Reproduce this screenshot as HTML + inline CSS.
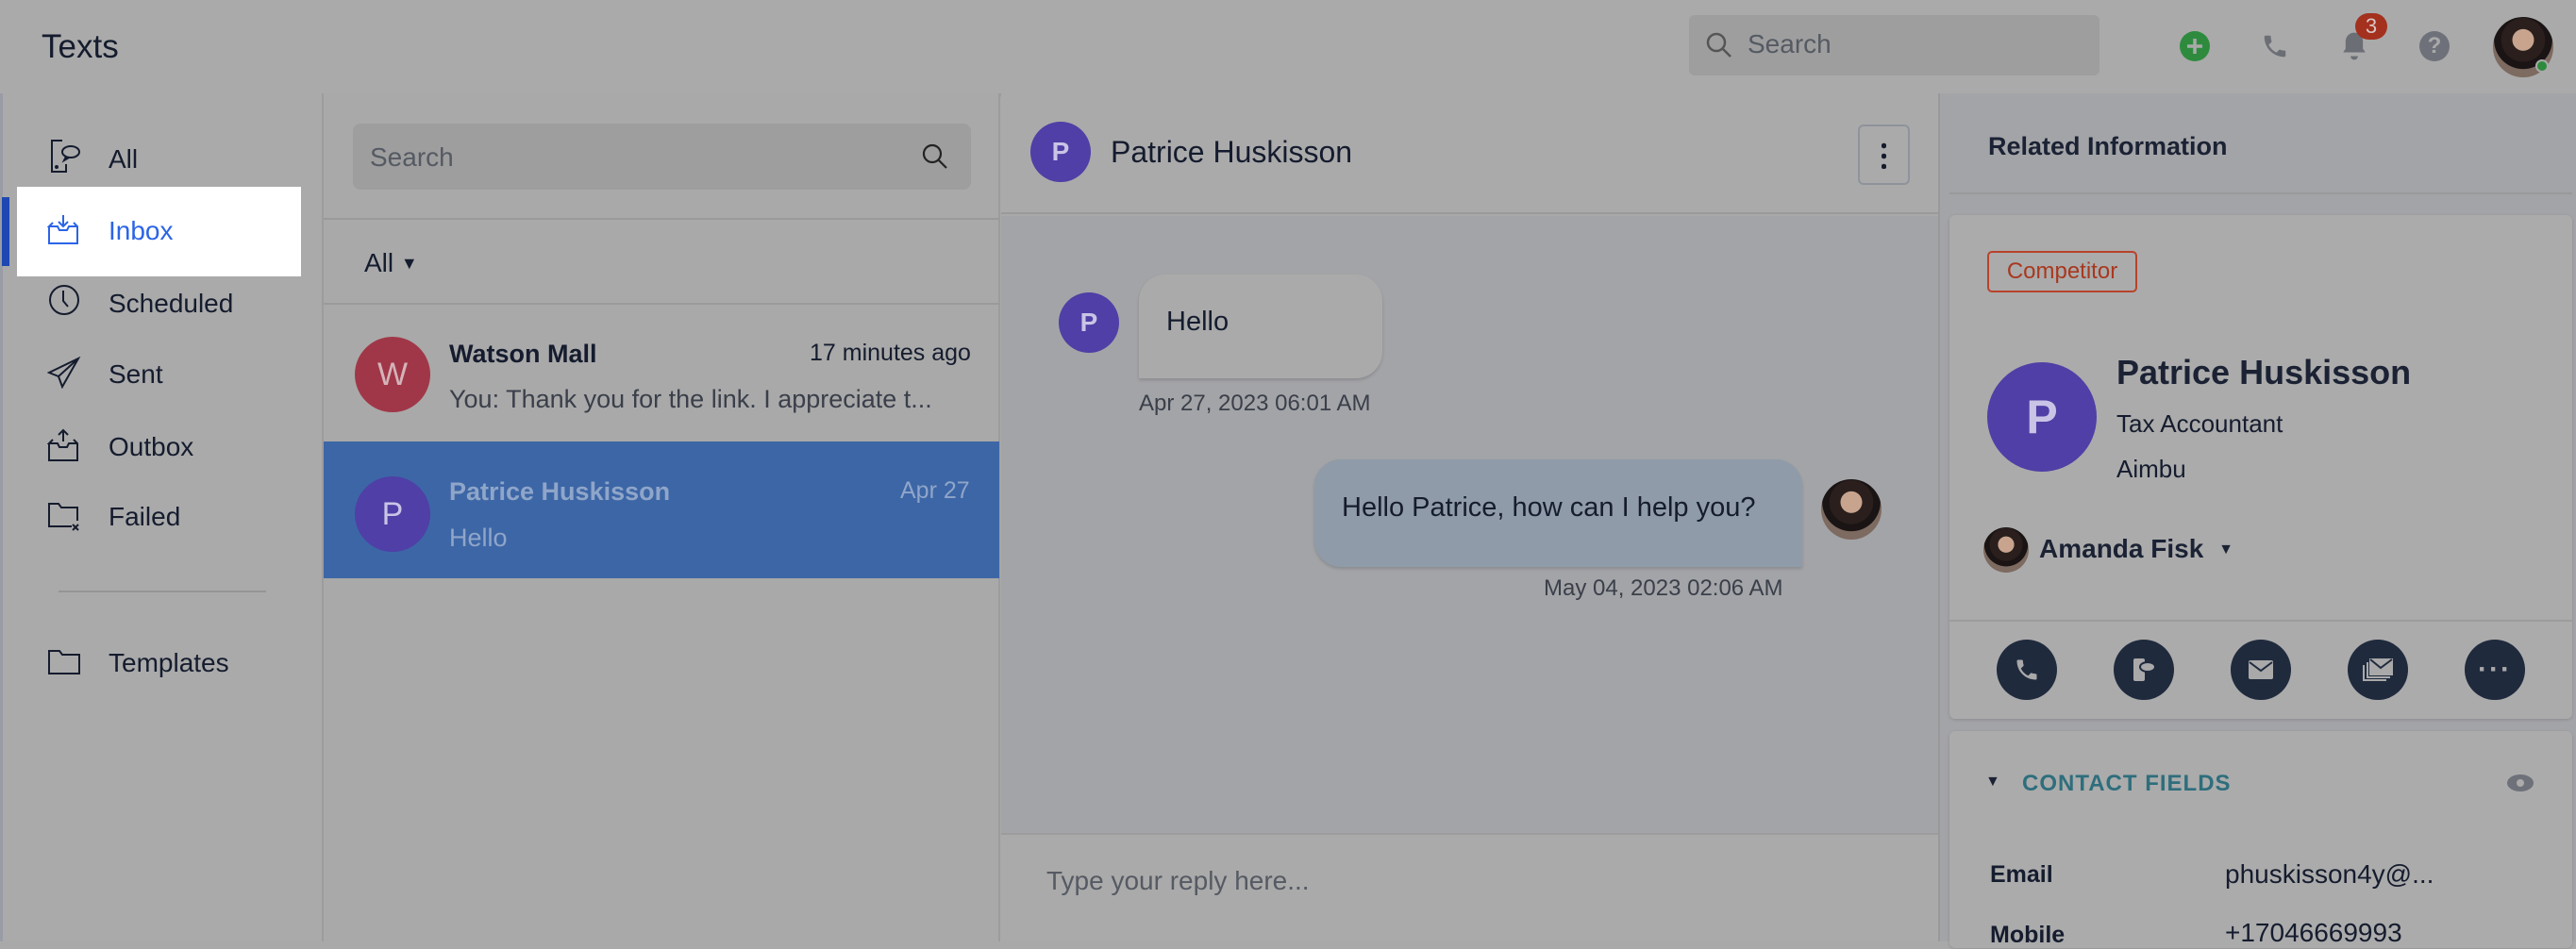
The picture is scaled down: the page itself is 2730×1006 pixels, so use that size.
<!DOCTYPE html>
<html><head><meta charset="utf-8"><style>
*{margin:0;padding:0;box-sizing:border-box}
body{width:2730px;height:998px;overflow:hidden;background:#a9a9a9;font-family:"Liberation Sans",sans-serif;color:#151c2e;position:relative}
.a{position:absolute}
.t{position:absolute;white-space:nowrap}
.av{position:absolute;border-radius:50%;background:#4f3fa6;color:#c9c4e6;display:flex;align-items:center;justify-content:center;font-weight:bold}
.photo{position:absolute;border-radius:50%;background:radial-gradient(circle at 50% 38%,#c8a48e 0 22%,#2a1f1d 23% 45%,#1a1414 46% 60%,#7d6a60 61%)}
.nav{position:absolute;left:115px;font-size:28px;color:#151c2e}
.ic{position:absolute;left:50px}
.btn{position:absolute;width:64px;height:64px;border-radius:50%;background:#1f2a3d;top:678px;display:flex;align-items:center;justify-content:center}
</style></head><body>
<!-- top bar -->
<div class="a" style="left:0;top:0;width:2730px;height:99px;background:#aaaaaa;box-shadow:0 2px 4px rgba(0,0,0,.12)"></div>
<div class="t" style="left:44px;top:30px;font-size:35px;color:#151c2e">Texts</div>
<div class="a" style="left:1790px;top:16px;width:435px;height:64px;background:#9e9e9e;border-radius:6px"></div>
<svg class="a" style="left:1806px;top:32px" width="32" height="32" viewBox="0 0 32 32"><circle cx="13" cy="13" r="9" fill="none" stroke="#555" stroke-width="2.5"/><line x1="20" y1="20" x2="28" y2="28" stroke="#555" stroke-width="2.5"/></svg>
<div class="t" style="left:1852px;top:31px;font-size:28px;color:#555a63">Search</div>
<svg class="a" style="left:2310px;top:33px" width="32" height="32"><circle cx="16" cy="16" r="16" fill="#2e8b3e"/><path d="M16 8v16M8 16h16" stroke="#a9a9a9" stroke-width="3.5"/></svg>
<svg class="a" style="left:2396px;top:34px" width="30" height="30" viewBox="0 0 24 24"><path d="M6.6 10.8a15 15 0 006.6 6.6l2.2-2.2c.3-.3.7-.4 1-.2 1.1.4 2.3.6 3.6.6.6 0 1 .4 1 1V20c0 .6-.4 1-1 1C10.6 21 3 13.4 3 4c0-.6.4-1 1-1h3.5c.6 0 1 .4 1 1 0 1.3.2 2.5.6 3.6.1.3 0 .7-.2 1z" fill="#6b6e75"/></svg>
<svg class="a" style="left:2479px;top:32px" width="32" height="34" viewBox="0 0 24 26"><path d="M12 2a7 7 0 00-7 7v6l-2 3h18l-2-3V9a7 7 0 00-7-7zM9 21a3 3 0 006 0z" fill="#6b6e75"/></svg>
<div class="a" style="left:2496px;top:14px;width:34px;height:28px;border-radius:14px;background:#a4301e;color:#d8c8c4;font-size:22px;text-align:center;line-height:28px">3</div>
<div class="a" style="left:2564px;top:33px;width:32px;height:32px;border-radius:50%;background:#6e717a;color:#a9a9a9;font-weight:bold;font-size:24px;text-align:center;line-height:32px">?</div>
<div class="photo" style="left:2642px;top:18px;width:64px;height:64px"></div>
<div class="a" style="left:2687px;top:63px;width:14px;height:14px;border-radius:50%;background:#2e8b3e;border:2px solid #aaa"></div>

<!-- left nav -->
<div class="a" style="left:0;top:99px;width:343px;height:899px;background:#aaaaaa;border-right:2px solid #9c9c9c"></div>
<div class="a" style="left:0;top:99px;width:3px;height:899px;background:#9a9ca4"></div>
<div class="a" style="left:18px;top:198px;width:301px;height:95px;background:#fff"></div>
<div class="a" style="left:2px;top:209px;width:8px;height:73px;background:#1e47b2"></div>
<svg class="ic" style="top:146px" width="40" height="40" viewBox="0 0 40 40" fill="none" stroke="#151c2e" stroke-width="2"><path d="M16 3H5v33h15V28"/><circle cx="10" cy="31" r="1" fill="#151c2e"/><ellipse cx="25" cy="15" rx="9" ry="6"/><path d="M20 20l-2 4 5-3"/></svg>
<div class="nav" style="top:153px">All</div>
<svg class="ic" style="top:226px" width="36" height="36" viewBox="0 0 36 36" fill="none" stroke="#2b64e6" stroke-width="2"><path d="M2 14v18h30V14l-4-4M6 10l-4 4h9l2 4h8l2-4h9"/><path d="M17 2v12M12 9l5 5 5-5"/></svg>
<div class="nav" style="top:229px;color:#2b64e6">Inbox</div>
<svg class="ic" style="top:300px" width="36" height="36" viewBox="0 0 36 36" fill="none" stroke="#151c2e" stroke-width="2"><circle cx="18" cy="18" r="15"/><path d="M17 8v11l5 6"/></svg>
<div class="nav" style="top:306px">Scheduled</div>
<svg class="ic" style="top:378px" width="36" height="34" viewBox="0 0 36 34" fill="none" stroke="#151c2e" stroke-width="2"><path d="M33 2L2 17l10 4 4 11zM12 21L33 2"/></svg>
<div class="nav" style="top:381px">Sent</div>
<svg class="ic" style="top:454px" width="36" height="36" viewBox="0 0 36 36" fill="none" stroke="#151c2e" stroke-width="2"><path d="M2 16v18h30V16l-4-4M6 12l-4 4h9l2 4h8l2-4h9"/><path d="M17 14V2M12 7l5-5 5 5"/></svg>
<div class="nav" style="top:458px">Outbox</div>
<svg class="ic" style="top:532px" width="36" height="34" viewBox="0 0 36 34" fill="none" stroke="#151c2e" stroke-width="2"><path d="M26 26H2V2h10l3 4h17v14"/><path d="M27 24l6 6M33 24l-6 6"/></svg>
<div class="nav" style="top:532px">Failed</div>
<div class="a" style="left:62px;top:626px;width:220px;height:2px;background:#959595"></div>
<svg class="ic" style="top:688px" width="36" height="28" viewBox="0 0 36 28" fill="none" stroke="#151c2e" stroke-width="2"><path d="M2 2h11l3 4h18v20H2z"/></svg>
<div class="nav" style="top:687px">Templates</div>

<!-- list column -->
<div class="a" style="left:343px;top:99px;width:717px;height:899px;background:#a9a9a9;border-right:2px solid #9c9c9c"></div>
<div class="a" style="left:374px;top:131px;width:655px;height:70px;background:#9e9e9e;border-radius:8px"></div>
<div class="t" style="left:392px;top:151px;font-size:28px;color:#555a63">Search</div>
<svg class="a" style="left:975px;top:150px" width="32" height="32"><circle cx="13" cy="13" r="9" fill="none" stroke="#222" stroke-width="2.2"/><line x1="20" y1="20" x2="28" y2="28" stroke="#222" stroke-width="2.2"/></svg>
<div class="a" style="left:343px;top:231px;width:717px;height:2px;background:#9a9a9a"></div>
<div class="t" style="left:386px;top:263px;font-size:28px">All <span style="font-size:18px;vertical-align:3px">▼</span></div>
<div class="a" style="left:343px;top:321px;width:717px;height:2px;background:#9a9a9a"></div>
<div class="av" style="left:376px;top:357px;width:80px;height:80px;background:#a03748;color:#d4b4b9;font-weight:normal;font-size:34px">W</div>
<div class="t" style="left:476px;top:360px;font-size:27px;font-weight:bold">Watson Mall</div>
<div class="t" style="left:858px;top:360px;font-size:25px">17 minutes ago</div>
<div class="t" style="left:476px;top:408px;font-size:27px;color:#3a3f4a">You: Thank you for the link. I appreciate t...</div>
<div class="a" style="left:343px;top:468px;width:716px;height:145px;background:#3d66a6"></div>
<div class="av" style="left:376px;top:505px;width:80px;height:80px;font-weight:normal;font-size:34px">P</div>
<div class="t" style="left:476px;top:506px;font-size:27px;font-weight:bold;color:#8fa6c9">Patrice Huskisson</div>
<div class="t" style="left:954px;top:506px;font-size:25px;color:#8fa6c9">Apr 27</div>
<div class="t" style="left:476px;top:555px;font-size:27px;color:#8fa6c9">Hello</div>

<!-- chat column -->
<div class="a" style="left:1061px;top:99px;width:993px;height:128px;background:#aaaaaa;border-bottom:2px solid #9a9a9a"></div>
<div class="av" style="left:1092px;top:129px;width:64px;height:64px;font-size:28px">P</div>
<div class="t" style="left:1177px;top:143px;font-size:32px">Patrice Huskisson</div>
<div class="a" style="left:1969px;top:132px;width:55px;height:64px;border:2px solid #8e939c;border-radius:6px"></div>
<div class="a" style="left:1994px;top:149px;width:5px;height:30px;background:radial-gradient(circle,#151c2e 2.5px,transparent 3px) 0 0/5px 11px"></div>
<div class="a" style="left:1061px;top:229px;width:993px;height:654px;background:#a3a4a7"></div>
<div class="av" style="left:1122px;top:310px;width:64px;height:64px;font-size:28px">P</div>
<div class="a" style="left:1207px;top:291px;width:258px;height:110px;background:#aaaaaa;border-radius:28px 28px 28px 0;box-shadow:0 2px 3px rgba(0,0,0,.15)"></div>
<div class="t" style="left:1236px;top:325px;font-size:29px">Hello</div>
<div class="t" style="left:1207px;top:414px;font-size:24px;color:#3a3f4a">Apr 27, 2023 06:01 AM</div>
<div class="a" style="left:1393px;top:487px;width:517px;height:114px;background:#8f9ba8;border-radius:28px 28px 0 28px;box-shadow:0 2px 3px rgba(0,0,0,.15)"></div>
<div class="t" style="left:1422px;top:522px;font-size:29px">Hello Patrice, how can I help you?</div>
<div class="photo" style="left:1930px;top:508px;width:64px;height:64px"></div>
<div class="t" style="left:1636px;top:610px;font-size:24px;color:#3a3f4a">May 04, 2023 02:06 AM</div>
<div class="a" style="left:1061px;top:883px;width:993px;height:115px;background:#aaaaaa;border-top:2px solid #9c9c9c"></div>
<div class="t" style="left:1109px;top:918px;font-size:28px;color:#555a63">Type your reply here...</div>
<div class="a" style="left:2054px;top:99px;width:2px;height:899px;background:#999"></div>

<!-- right panel -->
<div class="a" style="left:2056px;top:99px;width:674px;height:899px;background:#a3a4a7"></div>
<div class="t" style="left:2107px;top:140px;font-size:27px;font-weight:bold;color:#1b2234">Related Information</div>
<div class="a" style="left:2066px;top:204px;width:660px;height:2px;background:#999"></div>
<div class="a" style="left:2066px;top:228px;width:660px;height:534px;background:#ababab;border-radius:6px;box-shadow:0 1px 3px rgba(0,0,0,.15)"></div>
<div class="a" style="left:2106px;top:266px;width:159px;height:44px;border:2px solid #b8432a;border-radius:5px;color:#a8381f;font-size:24px;text-align:center;line-height:40px">Competitor</div>
<div class="av" style="left:2106px;top:384px;width:116px;height:116px;font-size:50px;color:#c9c4e6">P</div>
<div class="t" style="left:2243px;top:374px;font-size:36px;font-weight:bold;color:#1b2234">Patrice Huskisson</div>
<div class="t" style="left:2243px;top:434px;font-size:26px">Tax Accountant</div>
<div class="t" style="left:2243px;top:482px;font-size:26px">Aimbu</div>
<div class="photo" style="left:2102px;top:559px;width:48px;height:48px"></div>
<div class="t" style="left:2161px;top:566px;font-size:28px;font-weight:bold;color:#1b2234">Amanda Fisk <span style="font-size:16px;vertical-align:4px;margin-left:8px">▼</span></div>
<div class="a" style="left:2066px;top:657px;width:660px;height:2px;background:#9c9c9c"></div>
<div class="btn" style="left:2116px"><svg width="28" height="28" viewBox="0 0 24 24"><path d="M6.6 10.8a15 15 0 006.6 6.6l2.2-2.2c.3-.3.7-.4 1-.2 1.1.4 2.3.6 3.6.6.6 0 1 .4 1 1V20c0 .6-.4 1-1 1C10.6 21 3 13.4 3 4c0-.6.4-1 1-1h3.5c.6 0 1 .4 1 1 0 1.3.2 2.5.6 3.6.1.3 0 .7-.2 1z" fill="#a9a9a9"/></svg></div>
<div class="btn" style="left:2240px"><svg width="30" height="30" viewBox="0 0 30 30" fill="#a9a9a9"><rect x="4" y="3" width="12" height="24" rx="2"/><ellipse cx="19" cy="12" rx="8" ry="5" stroke="#1f2a3d" stroke-width="2"/></svg></div>
<div class="btn" style="left:2364px"><svg width="26" height="20" viewBox="0 0 26 20"><rect width="26" height="20" rx="2" fill="#a9a9a9"/><path d="M1 2l12 9 12-9" stroke="#1f2a3d" stroke-width="2" fill="none"/></svg></div>
<div class="btn" style="left:2488px"><svg width="34" height="26" viewBox="0 0 34 26" fill="none" stroke="#a9a9a9" stroke-width="2"><rect x="9" y="2" width="23" height="16" fill="#a9a9a9"/><path d="M6 5v16h24M2 8v16h24"/><path d="M9 2l11 9 12-9" stroke="#1f2a3d"/></svg></div>
<div class="btn" style="left:2612px;color:#a9a9a9;font-size:30px;font-weight:bold;letter-spacing:2px">···</div>
<div class="a" style="left:2066px;top:775px;width:660px;height:230px;background:#ababab;border-radius:6px;box-shadow:0 1px 3px rgba(0,0,0,.15)"></div>
<div class="t" style="left:2104px;top:820px;font-size:16px;color:#1b2234">▼</div>
<div class="t" style="left:2143px;top:817px;font-size:24px;font-weight:bold;color:#2e6e7c;letter-spacing:1px">CONTACT FIELDS</div>
<svg class="a" style="left:2656px;top:819px" width="30" height="22" viewBox="0 0 30 22"><ellipse cx="15" cy="11" rx="14" ry="9" fill="#6e717a"/><circle cx="15" cy="11" r="4" fill="#ababab"/></svg>
<div class="t" style="left:2109px;top:913px;font-size:25px;font-weight:bold">Email</div>
<div class="t" style="left:2358px;top:911px;font-size:28px">phuskisson4y@...</div>
<div class="t" style="left:2109px;top:977px;font-size:25px;font-weight:bold">Mobile</div>
<div class="t" style="left:2358px;top:973px;font-size:28px">+17046669993</div>
</body></html>
